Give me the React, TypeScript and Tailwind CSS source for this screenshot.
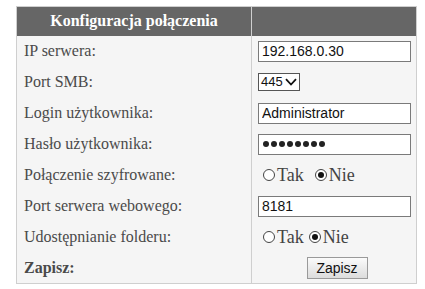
import React from "react";

const serif = { fontFamily: '"Liberation Serif", "Times New Roman", serif' };
const sans = { fontFamily: '"Liberation Sans", Arial, sans-serif' };

function TextField({ value }: { value: string }) {
  return (
    <input
      type="text"
      value={value}
      readOnly
      style={sans}
      className="block h-[21px] w-[153px] border border-[#7a7a7a] bg-white px-[3px] text-[14px] leading-none text-[#111] outline-none"
    />
  );
}

// password field drawn by hand so the dots have the size of the original
function PasswordField({ length }: { length: number }) {
  return (
    <div className="flex h-[21px] w-[153px] items-center gap-[2px] border border-[#7a7a7a] bg-white pl-[4px]">
      {Array.from({ length }).map((_, i) => (
        <span key={i} className="h-[6px] w-[6px] rounded-full bg-[#222]" />
      ))}
    </div>
  );
}

function Radio({ checked, label }: { checked?: boolean; label: string }) {
  return (
    <span className="inline-flex items-center">
      <span className="mr-[2px] flex h-[12px] w-[12px] shrink-0 items-center justify-center rounded-full border border-[#444] bg-white">
        {checked && <span className="h-[6px] w-[6px] rounded-full bg-[#111]" />}
      </span>
      <span>{label}</span>
    </span>
  );
}

function YesNo({ gap }: { gap: string }) {
  return (
    <div
      className={`ml-[5px] flex items-center ${gap} text-[18px] leading-none text-[#444]`}
      style={serif}
    >
      <Radio label="Tak" />
      <Radio label="Nie" checked />
    </div>
  );
}

export default function App() {
  const rows: { label: string; cell: React.ReactNode; bold?: boolean }[] = [
    { label: "IP serwera:", cell: <TextField value="192.168.0.30" /> },
    {
      label: "Port SMB:",
      cell: (
        <div
          style={sans}
          className="flex h-[18px] w-[42px] items-center justify-between border border-[#555] bg-white pl-[2px] pr-[2px] text-[13px] text-[#111]"
        >
          <span>445</span>
          <svg width="12" height="8" viewBox="0 0 12 8" className="shrink-0">
            <path d="M1 1.2 L6 6.5 L11 1.2" fill="none" stroke="#111" strokeWidth="1.8" />
          </svg>
        </div>
      ),
    },
    { label: "Login użytkownika:", cell: <TextField value="Administrator" /> },
    { label: "Hasło użytkownika:", cell: <PasswordField length={8} /> },
    { label: "Połączenie szyfrowane:", cell: <YesNo gap="gap-[11px]" /> },
    { label: "Port serwera webowego:", cell: <TextField value="8181" /> },
    { label: "Udostępnianie folderu:", cell: <YesNo gap="gap-[5px]" /> },
    {
      label: "Zapisz:",
      bold: true,
      cell: (
        <div className="flex justify-center">
          <button
            style={sans}
            className="h-[22px] w-[61px] border border-[#9a9a9a] bg-gradient-to-b from-[#fbfbfb] to-[#dcdcdc] text-[14px] text-[#111]"
          >
            Zapisz
          </button>
        </div>
      ),
    },
  ];

  return (
    <div className="min-h-[289px] bg-white pl-[16px] pt-[6px]">
      <table className="w-[400px] table-fixed border-collapse border border-[#cfcfcf] bg-[#f5f5f5]">
        <colgroup>
          <col className="w-[235px]" />
          <col className="w-[165px]" />
        </colgroup>
        <thead>
          <tr className="h-[29px] bg-[#666666]">
            <th
              style={serif}
              className="border-r border-[#cfcfcf] text-center text-[16px] font-bold text-white"
            >
              Konfiguracja połączenia
            </th>
            <th />
          </tr>
        </thead>
        <tbody>
          {rows.map((r) => (
            <tr key={r.label} className="h-[31px]">
              <td
                style={serif}
                className={`border-r border-[#cfcfcf] pl-[7px] text-[16px] text-[#4a4a4a] ${
                  r.bold ? "font-bold" : ""
                }`}
              >
                {r.label}
              </td>
              <td className="pl-[6px] align-middle">{r.cell}</td>
            </tr>
          ))}
        </tbody>
      </table>
    </div>
  );
}
